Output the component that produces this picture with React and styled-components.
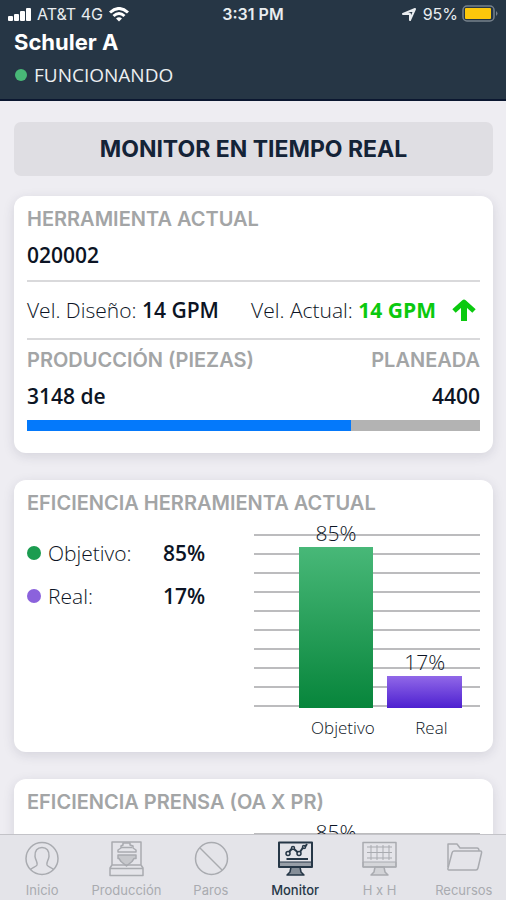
import React from "react";
import styled, { createGlobalStyle } from "styled-components";

const display = `Inter, "Liberation Sans", sans-serif`;
const text = `"Open Sans", "Noto Sans", sans-serif`;

const GlobalStyle = createGlobalStyle`
  *, *::before, *::after { box-sizing: border-box; }
  body { margin: 0; background: #eeedf2; color: #0c1424; font-family: ${text}; }
  h1, h2, p, dl, dt, dd { margin: 0; }
  button { border: 0; padding: 0; background: none; color: inherit; cursor: pointer; }
`;

const Screen = styled.div`
  display: flex;
  flex-direction: column;
  height: 100vh;
`;

const Header = styled.header`
  flex: none;
  padding: 2px 8px 10px;
  background: #263645;
  border-bottom: 2px solid #0b1730;
  color: #fff;
`;

const StatusBar = styled.div`
  display: grid;
  grid-template-columns: 1fr auto 1fr;
  align-items: center;
  height: 24px;
  font: 400 16px/24px ${display};
  color: #e9edf0;
`;

const StatusGroup = styled.div`
  display: flex;
  align-items: center;
  justify-content: ${(p) => (p.$end ? "flex-end" : "flex-start")};
  gap: ${(p) => (p.$end ? 4 : 6)}px;
  white-space: nowrap;
`;

const Clock = styled.time`
  font-weight: 600;
`;

const MachineName = styled.h1`
  padding: 0 6px;
  font: 700 22px/32px ${display};
`;

const MachineState = styled.p`
  display: flex;
  align-items: center;
  gap: 7px;
  padding: 3px 6px 0 7px;
  font-size: 19px;
  line-height: 28px;
  color: #eceff1;
`;

const StateDot = styled.span`
  width: 12px;
  height: 12px;
  border-radius: 50%;
  background: #48b877;
`;

const Main = styled.main`
  flex: 1;
  min-height: 0;
  overflow-y: auto;
  scrollbar-width: none;
  padding: 21px 13px 27px 14px;
`;

const MonitorButton = styled.button`
  display: block;
  width: 100%;
  height: 54px;
  margin-bottom: 20px;
  border-radius: 7px;
  background: #dfdee3;
  color: #142337;
  font: 700 23px/54px ${display};
`;

const Card = styled.section`
  margin-bottom: 27px;
  padding: 11px 13px 12px;
  border-radius: 12px;
  background: #fff;
  box-shadow: 0 3px 12px rgba(40, 40, 70, 0.13);
`;

const CardTitle = styled.h2`
  font: 600 20px/24px ${display};
  color: #a3a5a6;
  white-space: nowrap;
`;

const Row = styled.div`
  display: flex;
  align-items: center;
  justify-content: space-between;
`;

const Value = styled.p`
  padding: 9px 0;
  font-weight: 600;
  font-size: 21px;
  line-height: 30px;
`;

const Speeds = styled(Row)`
  height: 60px;
  margin: 1px 0 8px;
  border: solid #d9d9db;
  border-width: 2px 0;
  padding-right: 4px;
  white-space: nowrap;
`;

const CurrentSpeed = styled.div`
  display: flex;
  align-items: center;
  gap: 16px;
`;

const Speed = styled.p`
  font-weight: 300;
  font-size: 21px;
  line-height: 30px;
`;

const Strong = styled.strong`
  font-weight: ${(p) => (p.$good ? 700 : 600)};
  color: ${(p) => (p.$good ? "#0bc90f" : "inherit")};
`;

const Progress = styled.div`
  height: 11px;
  margin-bottom: 10px;
  background: #b3b3b3;
`;

const ProgressFill = styled.div`
  width: ${(p) => p.$percent}%;
  height: 100%;
  background: #0479fb;
`;

const Efficiency = styled.div`
  display: grid;
  grid-template-columns: 1fr 1fr;
`;

const Legend = styled.dl`
  display: grid;
  grid-template-columns: 136px auto;
  align-content: start;
  justify-content: start;
  row-gap: 13px;
  padding-top: 23px;
  font-size: 21px;
  line-height: 30px;
`;

const LegendName = styled.dt`
  display: flex;
  align-items: center;
  gap: 7px;
  font-weight: 300;
`;

const LegendDot = styled.span`
  width: 14px;
  height: 14px;
  border-radius: 50%;
  background: ${(p) => p.$color};
`;

const LegendValue = styled.dd`
  font-weight: 600;
`;

const Chart = styled.div`
  grid-column: 2;
  padding-top: 3px;
`;

const Plot = styled.div`
  display: grid;
  grid-template-columns: 1fr 1fr;
  column-gap: 14px;
  height: 190px;
  padding: 0 8% 0 20%;
  background: repeating-linear-gradient(
    transparent 0 16px,
    #bcbcbe 16px 18px,
    transparent 18px 19px
  );
`;

const BarColumn = styled.div`
  display: flex;
  flex-direction: column;
  justify-content: flex-end;
  height: 190px;
  text-align: center;
  font-size: 21px;
  font-weight: 300;
  line-height: 27px;
`;

const Bar = styled.div`
  flex: none;
  height: ${(p) => p.$percent}%;
  background: ${(p) => p.$fill};
`;

const AxisLabels = styled.div`
  display: grid;
  grid-template-columns: 1fr 1fr;
  column-gap: 14px;
  padding: 8px 5% 0 23%;
  text-align: center;
  font-size: 17px;
  font-weight: 300;
  line-height: 24px;
`;

const TabBar = styled.nav`
  flex: none;
  display: grid;
  grid-template-columns: repeat(6, 1fr);
  height: 66px;
  border-top: 1px solid #c3c3c8;
  background: #e4e4e9;
`;

const Tab = styled.button`
  display: flex;
  flex-direction: column;
  align-items: center;
  justify-content: space-between;
  padding: 5px 0 2px;
  color: ${(p) => (p.$active ? "#263747" : "#a9abb0")};
  font: ${(p) => (p.$active ? 500 : 400)} 13px/16px ${display};
`;

const TabIcon = styled.svg`
  width: 38px;
  height: 38px;
  fill: none;
  stroke: currentColor;
  stroke-width: 1.5;
  stroke-linejoin: round;
`;

const greenFill = "linear-gradient(#48b878, #07853b)";
const purpleFill = "linear-gradient(#9168e8, #4d20d0)";

const tabs = [
  {
    label: "Inicio",
    art: (
      <>
        <circle cx="19" cy="18.5" r="16" />
        <path d="M7.500 29.500c2-2 5.500-2.500 6.500-4.500 1-2.500-1.500-4.500-2-8.500-.5-6 2.500-9 7-9s7.500 3 7 9c-.5 4-3 6-2 8.500 1 2 4.500 2.500 6.500 4.500" />
      </>
    ),
  },
  {
    label: "Producción",
    art: (
      <>
        <path d="M5 25V2h29v23M5 25h29l2 3v7.500H3V28zM3 28.500h33" />
        <path d="M16 3h7v2l3 1v2l3 2v2H11v-2l3-2V6l2-1zM14 7.500h11" />
        <path
          d="M11 15h18v3.500h-2l-2 3-5.500 4.500-5.500-4.500-2-3h-1z"
          fill="currentColor"
          fillOpacity="0.5"
        />
      </>
    ),
  },
  {
    label: "Paros",
    art: (
      <>
        <circle cx="19.500" cy="18.500" r="16" />
        <path d="M8 8l22 22" />
      </>
    ),
  },
  {
    label: "Monitor",
    active: true,
    art: (
      <>
        <path d="M3 22h33v5H3z" fill="currentColor" fillOpacity="0.4" strokeWidth="1" />
        <path d="M3 2.500h33V27H3z" strokeWidth="2" />
        <path d="M15 27l-1 5-3 3h17l-3-3-1-5z" fill="currentColor" fillOpacity="0.5" />
        <path d="M13 12l3-3.500M18 9l4 3.500M24 12l3-4.500M29 7l2-3M10.500 19H32" strokeWidth="2" />
        <circle cx="12" cy="13.500" r="2" />
        <circle cx="17" cy="8" r="1.5" />
        <circle cx="23" cy="13.500" r="2" />
        <circle cx="28" cy="7" r="1.5" />
      </>
    ),
  },
  {
    label: "H x H",
    art: (
      <>
        <path d="M3 22h33v5H3z" fill="currentColor" fillOpacity="0.25" strokeWidth="1" />
        <path d="M3 2.500h33V27H3z" />
        <path d="M15 27l-1 5-3 3h17l-3-3-1-5z" fill="currentColor" fillOpacity="0.3" />
        <path d="M7 7h25M7 12.500h25M7 18h25M11 5v15M17 5v15M23 5v15M29 5v15" strokeWidth="1" />
      </>
    ),
  },
  {
    label: "Recursos",
    art: (
      <>
        <path d="M3 27V4h9l3 4h17q2 0 2 3" />
        <path d="M9 11h26.500q1.500 0 1 2L33 28q-.5 2-2 2H4q-1.500 0-1-2l4-15q.5-2 2-2z" />
      </>
    ),
  },
];

function EfficiencyChart({ bars }) {
  return (
    <Chart>
      <Plot>
        {bars.map((bar) => (
          <BarColumn key={bar.name}>
            {bar.percent}%
            <Bar $percent={bar.percent} $fill={bar.fill} />
          </BarColumn>
        ))}
      </Plot>
      <AxisLabels>
        {bars.map((bar) => (
          <span key={bar.name}>{bar.name}</span>
        ))}
      </AxisLabels>
    </Chart>
  );
}

const target = { name: "Objetivo", percent: 85, fill: greenFill };
const actual = { name: "Real", percent: 17, fill: purpleFill };

export default function App() {
  return (
    <Screen>
      <GlobalStyle />
      <Header>
        <StatusBar>
          <StatusGroup>
            <svg width="23" height="14" viewBox="0 0 23 14" fill="#fff" aria-hidden="true">
              <rect x="0" y="9" width="5" height="5" rx="1" />
              <rect x="6" y="7" width="5" height="7" rx="1" />
              <rect x="12" y="4" width="5" height="10" rx="1" />
              <rect x="18" y="1" width="5" height="13" rx="1" />
            </svg>
            <span>AT&amp;T 4G</span>
            <svg width="20" height="15" viewBox="0 0 20 15" fill="none" stroke="#fff" strokeWidth="3" aria-hidden="true">
              <path d="M1 5.500q9-8 18 0M4.500 9q5.500-5 11 0" />
              <path d="M10 14.500l-3-3q3-2.500 6 0z" fill="#fff" stroke="none" />
            </svg>
          </StatusGroup>
          <Clock>3:31 PM</Clock>
          <StatusGroup $end>
            <svg width="18" height="14" viewBox="0 0 18 14" fill="none" stroke="#e9edf0" strokeWidth="2" strokeLinejoin="round" aria-hidden="true">
              <path d="M2 7l12-5-5 11V7z" />
            </svg>
            <span>95%</span>
            <svg width="36" height="18" viewBox="0 0 36 18" aria-hidden="true">
              <rect x="1" y="1" width="31" height="15" rx="4" fill="none" stroke="#76818b" strokeWidth="1.500" />
              <rect x="3" y="3" width="26" height="11" rx="1" fill="#fdc80b" />
              <path d="M34 6q3 2.500 0 5z" fill="#76818b" />
            </svg>
          </StatusGroup>
        </StatusBar>
        <MachineName>Schuler A</MachineName>
        <MachineState>
          <StateDot />
          FUNCIONANDO
        </MachineState>
      </Header>

      <Main>
        <MonitorButton type="button">MONITOR EN TIEMPO REAL</MonitorButton>

        <Card>
          <CardTitle>HERRAMIENTA ACTUAL</CardTitle>
          <Value>020002</Value>
          <Speeds>
            <Speed>
              Vel. Diseño: <Strong>14 GPM</Strong>
            </Speed>
            <CurrentSpeed>
              <Speed>
                Vel. Actual: <Strong $good>14 GPM</Strong>
              </Speed>
              <svg width="24" height="24" viewBox="0 0 24 24" fill="none" stroke="#0bc90f" strokeWidth="6" aria-hidden="true">
                <path d="M12 23V5" />
                <path d="M2 13L12 4l10 9" strokeWidth="5" strokeLinejoin="round" />
              </svg>
            </CurrentSpeed>
          </Speeds>
          <Row>
            <CardTitle>PRODUCCIÓN (PIEZAS)</CardTitle>
            <CardTitle>PLANEADA</CardTitle>
          </Row>
          <Row>
            <Value>3148 de</Value>
            <Value>4400</Value>
          </Row>
          <Progress role="progressbar" aria-label="Producción" aria-valuenow={3148} aria-valuemin={0} aria-valuemax={4400}>
            <ProgressFill $percent={(3148 / 4400) * 100} />
          </Progress>
        </Card>

        <Card>
          <CardTitle>EFICIENCIA HERRAMIENTA ACTUAL</CardTitle>
          <Efficiency>
            <Legend>
              <LegendName>
                <LegendDot $color="#1b9c50" />
                Objetivo:
              </LegendName>
              <LegendValue>85%</LegendValue>
              <LegendName>
                <LegendDot $color="#8b62dc" />
                Real:
              </LegendName>
              <LegendValue>17%</LegendValue>
            </Legend>
            <EfficiencyChart bars={[target, actual]} />
          </Efficiency>
        </Card>

        <Card>
          <CardTitle>EFICIENCIA PRENSA (OA X PR)</CardTitle>
          <Efficiency>
            <EfficiencyChart bars={[target]} />
          </Efficiency>
        </Card>
      </Main>

      <TabBar>
        {tabs.map((tab) => (
          <Tab key={tab.label} type="button" $active={tab.active} aria-current={tab.active ? "page" : undefined}>
            <TabIcon viewBox="0 0 38 38" aria-hidden="true">
              {tab.art}
            </TabIcon>
            {tab.label}
          </Tab>
        ))}
      </TabBar>
    </Screen>
  );
}
